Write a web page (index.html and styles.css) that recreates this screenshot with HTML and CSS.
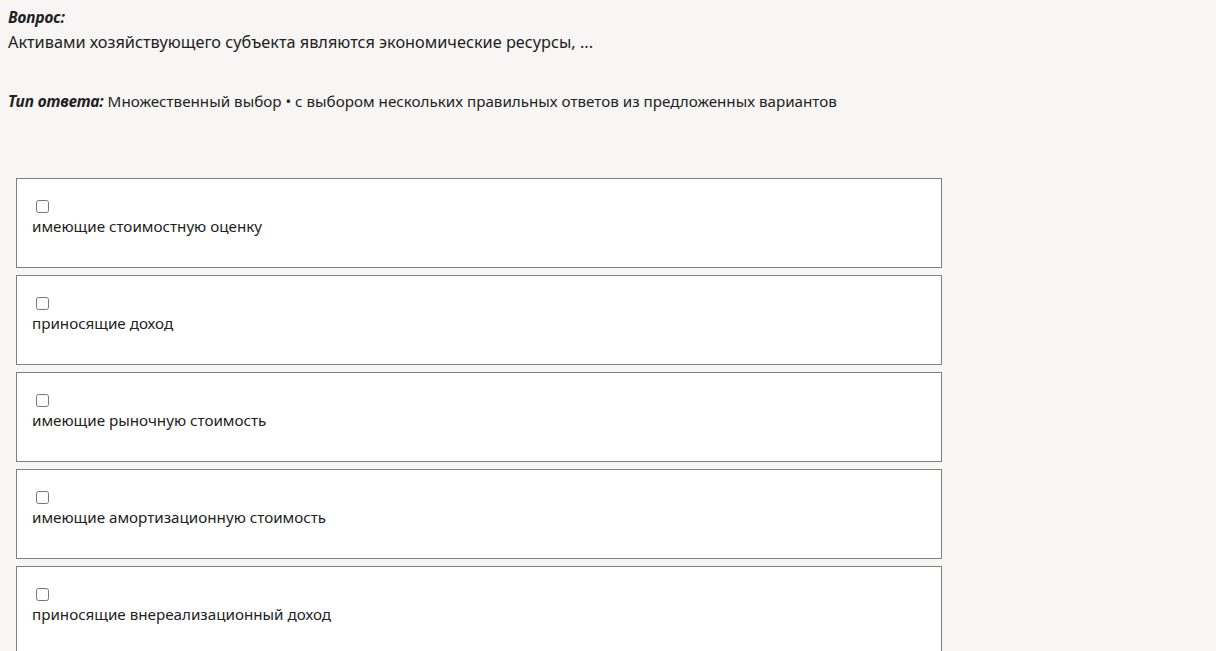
FILE: index.html
```html
<!DOCTYPE html>
<html lang="ru">
<head>
<meta charset="utf-8">
<link rel="stylesheet" href="styles.css">
</head>
<body>
<div class="question">
  <div class="label">Вопрос:</div>
  <div class="text">Активами хозяйствующего субъекта являются экономические ресурсы, ...</div>
</div>
<div class="type"><span class="label">Тип ответа:</span> Множественный выбор • с выбором нескольких правильных ответов из предложенных вариантов</div>
<div class="options">
  <label class="option"><input type="checkbox"><span>имеющие стоимостную оценку</span></label>
  <label class="option"><input type="checkbox"><span>приносящие доход</span></label>
  <label class="option"><input type="checkbox"><span>имеющие рыночную стоимость</span></label>
  <label class="option"><input type="checkbox"><span>имеющие амортизационную стоимость</span></label>
  <label class="option"><input type="checkbox"><span>приносящие внереализационный доход</span></label>
</div>
</body>
</html>
```
FILE: styles.css
```css
html, body {
  margin: 0;
  padding: 0;
  background: #f7f6f4;
  color: #222;
  font-family: "Noto Sans", "Open Sans", sans-serif;
}
body {
  padding: 7px 8px 0 8px;
}
.label {
  font-weight: bold;
  font-style: italic;
  font-size: 15.5px;
  letter-spacing: -0.1px;
}
.question .label {
  line-height: 20px;
}
.question .text {
  font-size: 16.3px;
  line-height: 22px;
  margin-top: 4px;
}
.type {
  margin-top: 38px;
  font-size: 15.2px;
  line-height: 20px;
}
.options {
  margin-top: 67px;
  padding-left: 8px;
  width: 926px;
  display: flex;
  flex-direction: column;
  gap: 7px;
}
.option {
  display: flex;
  flex-direction: column;
  align-items: flex-start;
  height: 88px;
  box-sizing: content-box;
  background: #fff;
  border: 1px solid #808080;
  padding: 0 15px;
}
.option input {
  width: 13px;
  height: 13px;
  margin: 21px 0 0 4px;
}
.option span {
  font-size: 15.2px;
  line-height: 20px;
  margin-top: 3px;
}
```
